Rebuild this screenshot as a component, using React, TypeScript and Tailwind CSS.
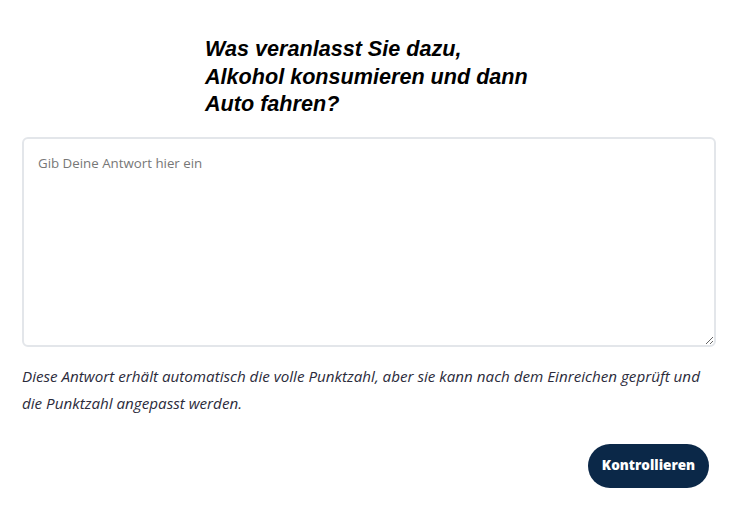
const App = () => {
  return (
    <div className="w-[738px] h-[511px] bg-white px-[22px] pt-[35px]">
      <h2 className="pl-[183px] w-[560px] text-[21.6px] leading-[27.5px] font-bold italic text-black font-['Liberation_Sans',Arial,sans-serif]">
        Was veranlasst Sie dazu,
        <br />
        Alkohol konsumieren und dann
        <br />
        Auto fahren?
      </h2>
      <textarea
        placeholder="Gib Deine Antwort hier ein"
        className="block mt-[19px] w-[694px] h-[210px] rounded-[6px] border-2 border-[#e3e6ea] px-[14px] py-[15px] text-[13.3px] text-[#333] placeholder:text-[#777] outline-none font-['Open_Sans',sans-serif]"
      />
      <p className="mt-[16px] text-[15.2px] leading-[27px] italic text-[#2b2b3b] font-['Open_Sans',sans-serif]">
        Diese Antwort erhält automatisch die volle Punktzahl, aber sie kann nach dem Einreichen geprüft und die
        Punktzahl angepasst werden.
      </p>
      <div className="flex justify-end mt-[27px] pr-[7px]">
        <button className="h-[44px] w-[121px] rounded-full bg-[#0b2848] text-white text-[13.5px] font-extrabold font-['Open_Sans',sans-serif]">
          Kontrollieren
        </button>
      </div>
    </div>
  );
};

export default App;
